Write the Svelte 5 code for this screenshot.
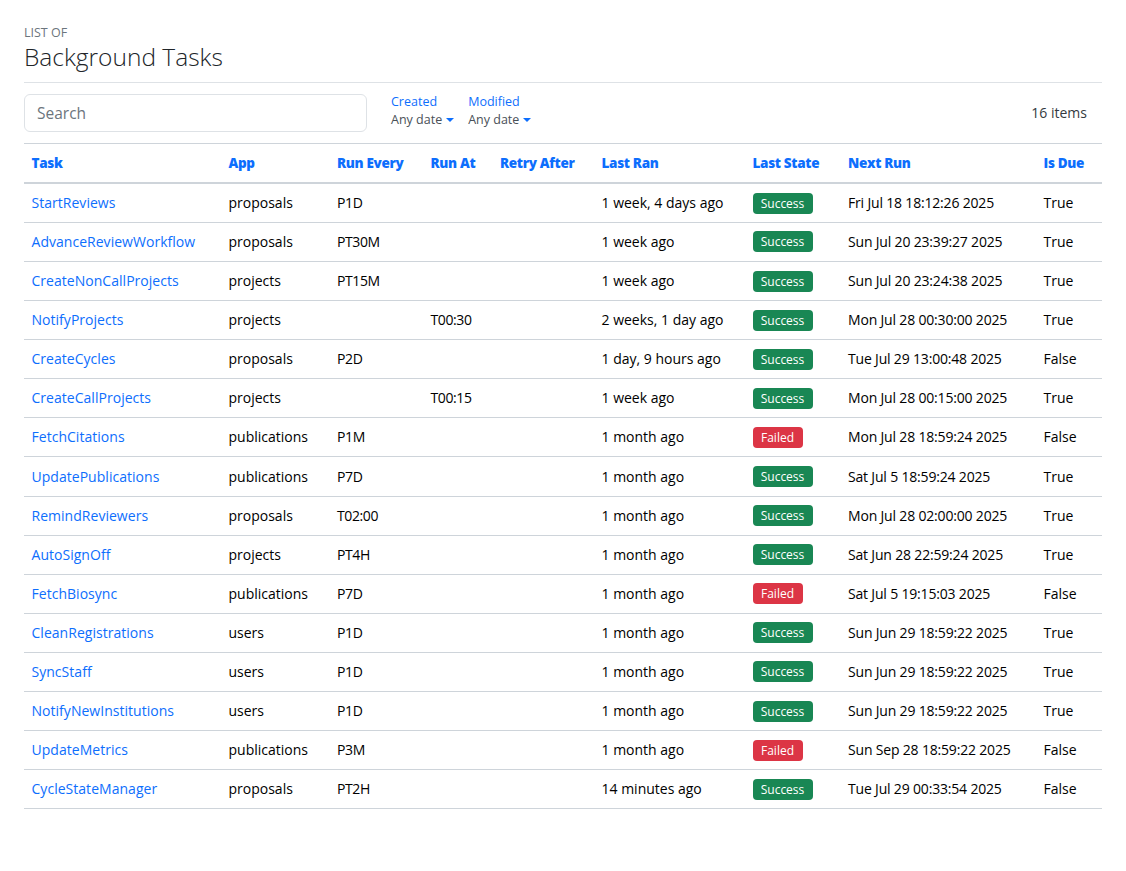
<script>
  const tasks = [
    ["StartReviews", "proposals", "P1D", "", "", "1 week, 4 days ago", "Success", "Fri Jul 18 18:12:26 2025", "True"],
    ["AdvanceReviewWorkflow", "proposals", "PT30M", "", "", "1 week ago", "Success", "Sun Jul 20 23:39:27 2025", "True"],
    ["CreateNonCallProjects", "projects", "PT15M", "", "", "1 week ago", "Success", "Sun Jul 20 23:24:38 2025", "True"],
    ["NotifyProjects", "projects", "", "T00:30", "", "2 weeks, 1 day ago", "Success", "Mon Jul 28 00:30:00 2025", "True"],
    ["CreateCycles", "proposals", "P2D", "", "", "1 day, 9 hours ago", "Success", "Tue Jul 29 13:00:48 2025", "False"],
    ["CreateCallProjects", "projects", "", "T00:15", "", "1 week ago", "Success", "Mon Jul 28 00:15:00 2025", "True"],
    ["FetchCitations", "publications", "P1M", "", "", "1 month ago", "Failed", "Mon Jul 28 18:59:24 2025", "False"],
    ["UpdatePublications", "publications", "P7D", "", "", "1 month ago", "Success", "Sat Jul 5 18:59:24 2025", "True"],
    ["RemindReviewers", "proposals", "T02:00", "", "", "1 month ago", "Success", "Mon Jul 28 02:00:00 2025", "True"],
    ["AutoSignOff", "projects", "PT4H", "", "", "1 month ago", "Success", "Sat Jun 28 22:59:24 2025", "True"],
    ["FetchBiosync", "publications", "P7D", "", "", "1 month ago", "Failed", "Sat Jul 5 19:15:03 2025", "False"],
    ["CleanRegistrations", "users", "P1D", "", "", "1 month ago", "Success", "Sun Jun 29 18:59:22 2025", "True"],
    ["SyncStaff", "users", "P1D", "", "", "1 month ago", "Success", "Sun Jun 29 18:59:22 2025", "True"],
    ["NotifyNewInstitutions", "users", "P1D", "", "", "1 month ago", "Success", "Sun Jun 29 18:59:22 2025", "True"],
    ["UpdateMetrics", "publications", "P3M", "", "", "1 month ago", "Failed", "Sun Sep 28 18:59:22 2025", "False"],
    ["CycleStateManager", "proposals", "PT2H", "", "", "14 minutes ago", "Success", "Tue Jul 29 00:33:54 2025", "False"]
  ];
  const columns = [
    ["Task", 197], ["App", 108.5], ["Run Every", 93.5], ["Run At", 69.5], ["Retry After", 101.5],
    ["Last Ran", 151], ["Last State", 95.5], ["Next Run", 195.5], ["Is Due", 66]
  ];
  const filters = ["Created", "Modified"];
</script>

<div class="page">
  <header class="heading">
    <div class="pre-title">LIST OF</div>
    <h1>Background Tasks</h1>
  </header>

  <div class="toolbar">
    <input class="search" type="text" placeholder="Search" />
    <div class="filters">
      {#each filters as name}
        <div class="filter">
          <a href="#top">{name}</a>
          <span class="any">Any date<i class="caret"></i></span>
        </div>
      {/each}
    </div>
    <div class="count">16 items</div>
  </div>

  <table>
    <colgroup>
      {#each columns as col}
        <col style="width: {col[1]}px" />
      {/each}
    </colgroup>
    <thead>
      <tr>
        {#each columns as col}
          <th>{col[0]}</th>
        {/each}
      </tr>
    </thead>
    <tbody>
      {#each tasks as t}
        <tr>
          <td class="task"><a href="#top">{t[0]}</a></td>
          <td>{t[1]}</td>
          <td class="code">{t[2]}</td>
          <td class="code">{t[3]}</td>
          <td>{t[4]}</td>
          <td>{t[5]}</td>
          <td class="state"><span class="badge" class:failed={t[6] === "Failed"}>{t[6]}</span></td>
          <td class="date">{t[7]}</td>
          <td>{t[8]}</td>
        </tr>
      {/each}
    </tbody>
  </table>
</div>

<style>
  :global(body) {
    margin: 0;
    background: #fff;
    color: #000;
    font-family: "Open Sans", "Noto Sans", sans-serif;
    font-size: 14px;
  }

  .page {
    padding: 24px 24px 62px;
  }

  .heading {
    border-bottom: 1px solid #dee2e6;
    box-sizing: border-box;
    height: 59px;
  }

  .pre-title {
    font-size: 12.5px;
    line-height: 18px;
    color: #6c757d;
  }

  h1 {
    margin: 0;
    font-size: 24.5px;
    font-weight: 300;
    line-height: 30px;
    color: #212529;
  }

  .toolbar {
    display: flex;
    align-items: center;
    height: 61px;
    border-bottom: 1px solid #ced4da;
    box-sizing: border-box;
  }

  .search {
    width: 343px;
    height: 38px;
    box-sizing: border-box;
    padding: 0 12px;
    border: 1px solid #dee2e6;
    border-radius: 6px;
    font: inherit;
    font-size: 15.5px;
    outline: none;
  }

  .search::placeholder {
    color: #6c757d;
    opacity: 1;
  }

  .filters {
    display: flex;
    gap: 14px;
    margin-left: 24px;
    margin-bottom: 5px;
  }

  .filter {
    display: flex;
    flex-direction: column;
    font-size: 12.5px;
    line-height: 18px;
  }

  .filter a {
    color: #0d6efd;
    text-decoration: none;
  }

  .any {
    color: #495057;
  }

  .caret {
    display: inline-block;
    margin-left: 4px;
    vertical-align: 2px;
    border-top: 4.5px solid #0d6efd;
    border-left: 4.5px solid transparent;
    border-right: 4.5px solid transparent;
  }

  .count {
    margin-left: auto;
    margin-bottom: 1px;
    padding-right: 15px;
    color: #343a40;
  }

  table {
    width: 1078px;
    table-layout: fixed;
    border-collapse: collapse;
  }

  th {
    height: 39.3px;
    padding: 0 7.5px;
    box-sizing: border-box;
    text-align: left;
    font-weight: 800;
    font-size: 13.5px;
    letter-spacing: -0.32px;
    color: #0d6efd;
    white-space: nowrap;
    border-bottom: 2px solid #ced4da;
  }

  td {
    height: 39.1px;
    padding: 0 7.5px 1px;
    box-sizing: border-box;
    border-bottom: 1px solid #ced4da;
    white-space: nowrap;
  }

  td a {
    color: #0d6efd;
    text-decoration: none;
  }

  .task {
    letter-spacing: 0.03px;
  }

  .code {
    letter-spacing: -0.4px;
  }

  .date {
    letter-spacing: -0.18px;
  }

  td.state {
    padding-bottom: 0;
  }

  .badge {
    display: inline-block;
    width: 60px;
    box-sizing: border-box;
    padding: 3px 0;
    text-align: center;
    border-radius: 4px;
    background: #198754;
    color: #fff;
    font-size: 12px;
    line-height: 15px;
  }

  .badge.failed {
    width: 50px;
    background: #dc3545;
  }
</style>
